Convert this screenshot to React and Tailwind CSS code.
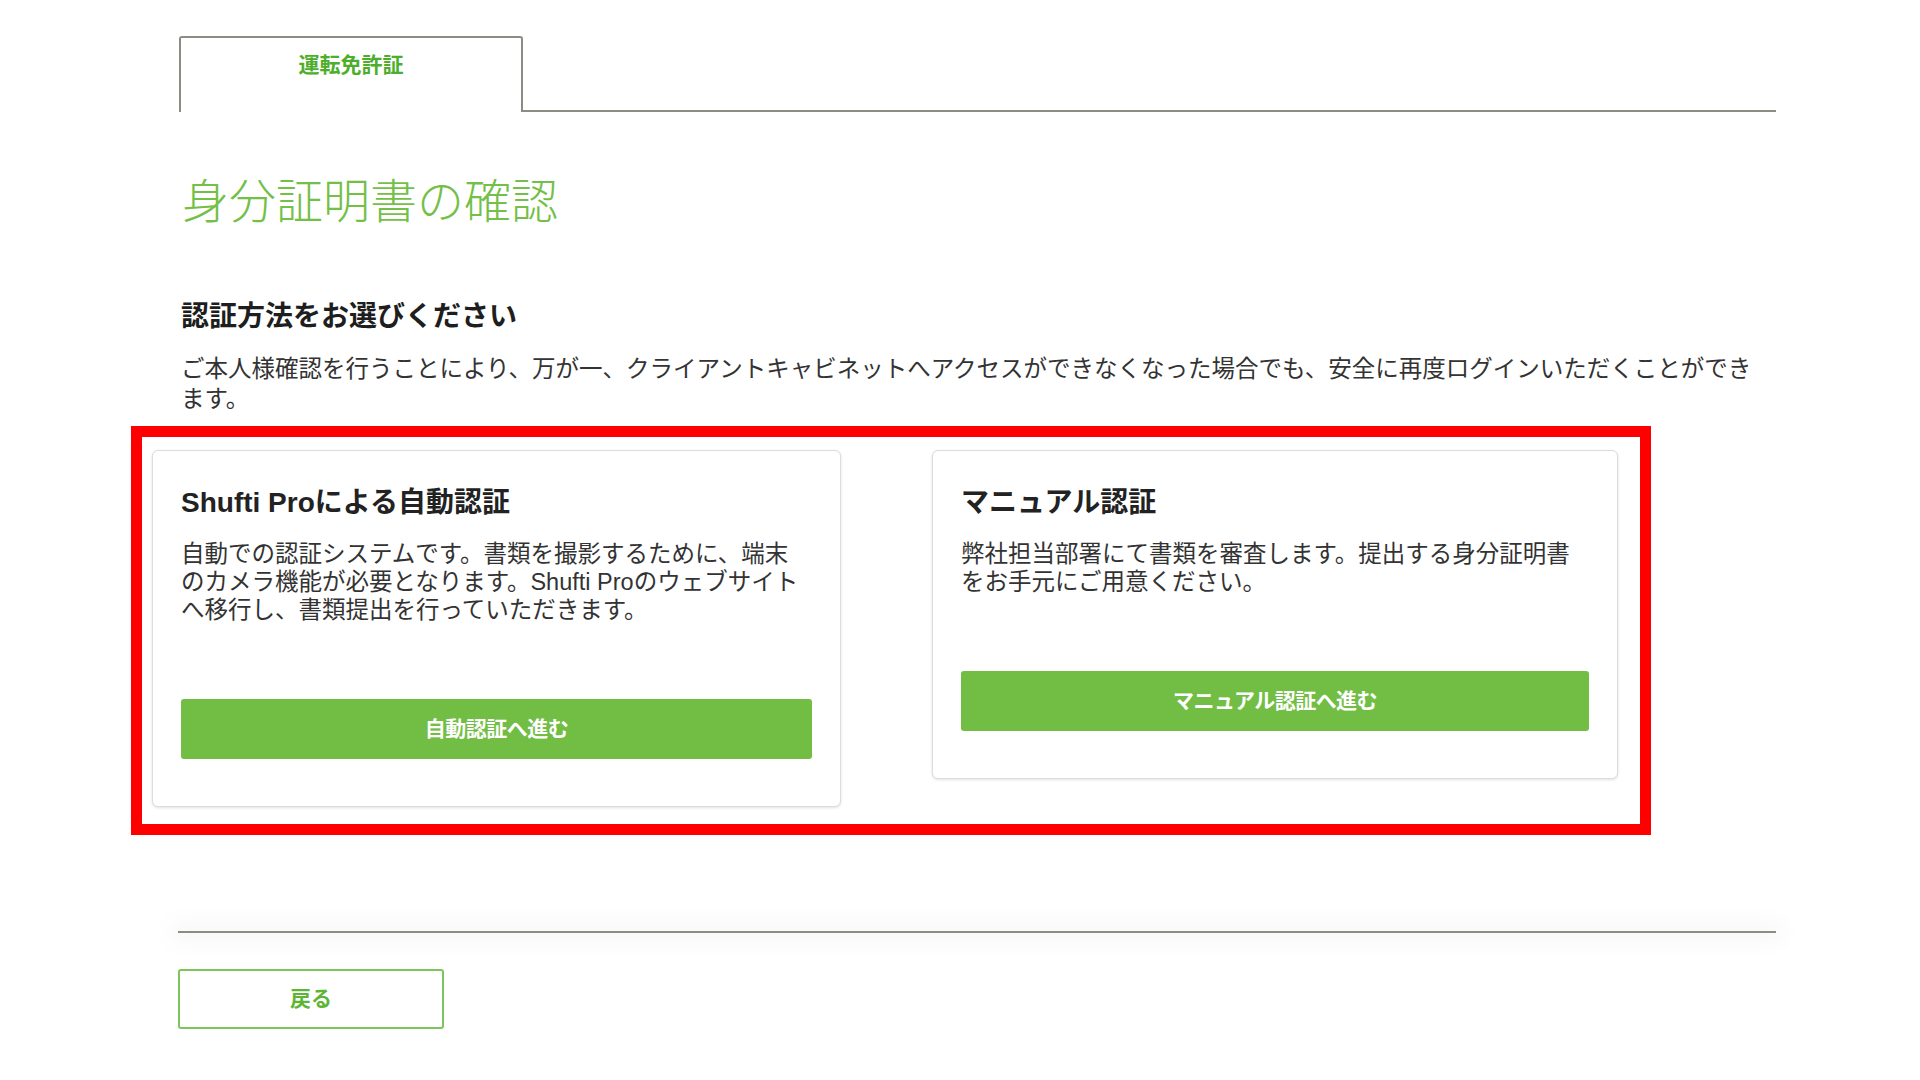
const font = "font-['Liberation_Sans','Noto_Sans_CJK_JP',sans-serif]"

function MethodCard({ title, lines, action, width }) {
  return (
    <div className={`${width} shrink-0 bg-white border border-[#dcdcdc] rounded-[6px] shadow-[0_1px_3px_rgba(0,0,0,0.12)] px-[28px] pt-[34px] pb-[47px]`}>
      <h3 className="text-[28px] leading-[36px] font-bold text-[#222]">{title}</h3>
      <p className="mt-[19px] max-w-[620px] text-[23.5px] leading-[28px] text-[#333]">{lines}</p>
      <button className="mt-[75px] w-full h-[60px] rounded-[3px] bg-[#72bd44] text-white text-[21px] font-bold tracking-tight">
        {action}
      </button>
    </div>
  )
}

export default function App() {
  return (
    <div className={`min-h-screen bg-white ${font}`}>
      <div className="ml-[179px] w-[1597px] pt-[36px]">
        {/* tabs */}
        <div className="flex items-end">
          <div className="w-[344px] h-[76px] border-2 border-b-0 border-[#8c8c84] rounded-t-[3px] flex justify-center pt-[13px]">
            <span className="text-[21px] leading-[28px] font-bold text-[#4cae2a]">運転免許証</span>
          </div>
          <div className="flex-1 border-b-2 border-[#8c8c84]" />
        </div>

        <h1 className="mt-[62px] pl-[3px] text-[47px] leading-[56px] font-light text-[#74bf48]">身分証明書の確認</h1>

        <h2 className="mt-[69px] pl-[2px] text-[28px] leading-[36px] font-bold text-[#1e1e1e]">認証方法をお選びください</h2>
        <p className="mt-[19px] pl-[2px] max-w-[1590px] text-[23.5px] leading-[30px] text-[#333]">
          ご本人様確認を行うことにより、万が一、クライアントキャビネットへアクセスができなくなった場合でも、安全に再度ログインいただくことができます。
        </p>

        {/* highlighted choices */}
        <div className="mt-[12px] -ml-[48px] w-[1520px] border-[11px] border-[#ff0000] pl-[10px] pr-[20px] pt-[13px] pb-[17px]">
          <div className="flex items-start gap-[91px]">
            <MethodCard
              width="w-[689px]"
              title="Shufti Proによる自動認証"
              lines="自動での認証システムです。書類を撮影するために、端末のカメラ機能が必要となります。Shufti Proのウェブサイトへ移行し、書類提出を行っていただきます。"
              action="自動認証へ進む"
            />
            <MethodCard
              width="w-[686px]"
              title="マニュアル認証"
              lines="弊社担当部署にて書類を審査します。提出する身分証明書をお手元にご用意ください。"
              action="マニュアル認証へ進む"
            />
          </div>
        </div>

        <div className="mt-[96px] -ml-[1px] h-[2px] bg-[#8c8c84] shadow-[0_0_24px_8px_rgba(0,0,0,0.04)]" />

        <button className="mt-[36px] -ml-[1px] w-[266px] h-[60px] border-2 border-[#7cc55a] rounded-[3px] bg-white text-[21px] font-bold text-[#5cb533]">
          戻る
        </button>
      </div>
    </div>
  )
}
